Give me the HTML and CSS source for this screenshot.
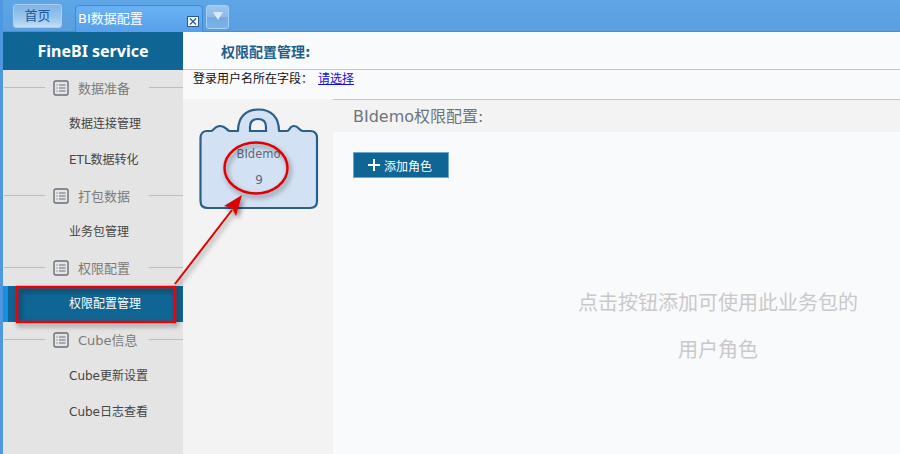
FILE: index.html
```html
<!DOCTYPE html>
<html lang="zh">
<head>
<meta charset="utf-8">
<title>BI数据配置</title>
<link rel="stylesheet" href="styles.css">
</head>
<body>
<svg class="defs" width="0" height="0" aria-hidden="true">
  <symbol id="list" viewBox="0 0 16 16">
    <rect x="1" y="1" width="14" height="14" rx="1.5" fill="none" stroke="#666e7a" stroke-width="1.4"/>
    <path d="M3.500 5h1M6 5h6.500M3.500 8h1M6 8h6.500M3.500 11h1M6 11h6.500" stroke="#666e7a" stroke-width="1.100" fill="none"/>
  </symbol>
</svg>
<div class="app">
  <header class="tabbar">
    <div class="tab-home">首页</div>
    <div class="tab-active"><span>BI数据配置</span>
      <svg class="tab-close" viewBox="0 0 12 11" width="12" height="11"><rect x=".5" y=".5" width="11" height="10" fill="#f4f8fc" stroke="#275b92"/><path d="M3 2.500L9 8.500M9 2.500L3 8.500" stroke="#275b92" stroke-width="1.200"/></svg>
    </div>
    <div class="tab-more"><i class="tri"></i></div>
  </header>
  <div class="body">
    <aside class="side">
      <div class="brand">FineBI service</div>
      <div class="group"><svg class="gicon"><use href="#list"/></svg><span>数据准备</span></div>
      <div class="item">数据连接管理</div>
      <div class="item">ETL数据转化</div>
      <div class="group"><svg class="gicon"><use href="#list"/></svg><span>打包数据</span></div>
      <div class="item">业务包管理</div>
      <div class="group"><svg class="gicon"><use href="#list"/></svg><span>权限配置</span></div>
      <div class="item active">权限配置管理</div>
      <div class="group"><svg class="gicon"><use href="#list"/></svg><span>Cube信息</span></div>
      <div class="item">Cube更新设置</div>
      <div class="item">Cube日志查看</div>
    </aside>
    <main class="main">
      <div class="title">权限配置管理:</div>
      <div class="userfield">登录用户名所在字段：<a class="pick" href="#">请选择</a></div>
      <div class="panes">
        <section class="packs">
          <div class="pack">
            <svg class="bag" viewBox="0 0 120 102" width="120" height="102">
              <path d="M8 23H12C15 23 15 18 21 18C27 18 28 23 31 23H39C39 9 47 1.500 59.500 1.500C72 1.500 80 9 80 23H88C91 23 90 18 95 18C100 18 100 23 104 23H111C116 23 118 26 118 30V93C118 98 115 100 111 100H9C4 100 1.500 98 1.500 93V30C1.500 26 4 23 8 23Z" fill="#d2e2f4" stroke="#2a5f87" stroke-width="2.200" stroke-linejoin="round"/>
              <path d="M51 23V19C51 14 54 11 59 11C64 11 67 14 67 19V23Z" fill="#f3f3f3" stroke="#2a5f87" stroke-width="2.200"/>
            </svg>
            <div class="pack-name">BIdemo</div>
            <div class="pack-count">9</div>
          </div>
        </section>
        <section class="detail">
          <div class="detail-head">BIdemo权限配置:</div>
          <div class="detail-body">
            <button class="add"><svg class="plus" viewBox="0 0 12 12" width="12" height="12"><path d="M6 0V12M0 6H12" stroke="#fff" stroke-width="2"/></svg>添加角色</button>
            <div class="empty"><p>点击按钮添加可使用此业务包的</p><p>用户角色</p></div>
          </div>
        </section>
      </div>
    </main>
  </div>
  <svg class="note" width="900" height="454" viewBox="0 0 900 454">
    <defs>
      <filter id="sh" x="-20%" y="-20%" width="140%" height="140%"><feDropShadow dx="2" dy="3" stdDeviation="2.500" flood-color="#000" flood-opacity=".45"/></filter>
    </defs>
    <g filter="url(#sh)">
      <rect x="17" y="287" width="158" height="35" fill="none" stroke="#f00000" stroke-width="2.500"/>
      <path d="M175 284L232 210" stroke="#e00000" stroke-width="2" fill="none"/>
      <path d="M242 195L236 216L232 208L224 206Z" fill="#e00000"/>
      <ellipse cx="256" cy="168" rx="31.500" ry="25.500" fill="none" stroke="#e00000" stroke-width="2.500"/>
    </g>
  </svg>
</div>
</body>
</html>
```
FILE: styles.css
```css
* { box-sizing: border-box; }
html, body { margin: 0; padding: 0; }
body { width: 900px; height: 454px; overflow: hidden; background: #f9fafc; font-family: "DejaVu Sans", "Noto Sans CJK SC", sans-serif; }
.defs { position: absolute; }
.app { position: relative; width: 900px; height: 454px; display: flex; flex-direction: column; border-left: 3px solid #4f97e0; }
.tabbar { height: 32px; flex: none; display: flex; align-items: flex-start; background: linear-gradient(#5ea6e6, #5a9fe0); border-bottom: 1px solid #4a8fd4; padding: 4px 0 0 10px; }
.tab-home { width: 49px; height: 24px; margin-right: 13px; border: 1px solid #a9d0f2; border-radius: 3px; background: linear-gradient(#7fb3e6, #9cc6ee 60%, #c3def5); color: #1d5a96; font-size: 13px; line-height: 22px; text-align: center; }
.tab-active { position: relative; width: 128px; height: 27px; margin: 1px 3px 0 0; border: 1px solid #3c8ad8; border-bottom: 0; border-radius: 4px 4px 0 0; background: linear-gradient(#6ab2f5, #57a0ea); color: #fff; font-size: 13px; line-height: 25px; padding-left: 2px; white-space: nowrap; }
.tab-close { position: absolute; right: 3px; bottom: 5px; }
.tab-more { width: 23px; height: 24px; margin-top: 1px; border: 1px solid #a9d0f2; border-radius: 3px; background: linear-gradient(#9ac5ee, #8dbcea 50%, #72aae2 50%, #7db2e6); display: flex; align-items: center; justify-content: center; }
.tri { width: 0; height: 0; margin-bottom: 3px; border: 5px solid transparent; border-top: 8px solid #d9eafa; border-bottom: 0; }
.body { flex: 1; display: flex; min-height: 0; }
.side { width: 180px; flex: none; background: #e4e4e4; }
.brand { height: 38px; background: #0f6593; color: #fff; font-family: "Noto Sans", sans-serif; font-size: 16px; font-weight: 700; line-height: 38px; text-align: center; }
.group { height: 36px; display: flex; align-items: center; color: #7b7b7b; font-size: 13px; padding: 0 0 1px 1px; position: relative; }
.group::before { content: ""; width: 41px; height: 1px; background: #bdbdbd; margin-right: 8px; flex: none; }
.group::after { content: ""; flex: 1; height: 1px; background: #bdbdbd; margin-left: 10px; min-width: 0; }
.group span { width: 61px; white-space: nowrap; margin-left: 0; }
.gicon { width: 16px; height: 16px; margin-right: 9px; flex: none; }
.item { height: 36px; line-height: 36px; padding-left: 66px; font-size: 12px; color: #444; white-space: nowrap; }
.item.active { background: #0f6593; color: #fff; border-left: 5px solid #1a8de0; padding-left: 61px; }
.main { flex: 1; min-width: 0; display: flex; flex-direction: column; background: #f9fafc; }
.title { height: 38px; flex: none; line-height: 41px; padding-left: 38px; font-size: 14px; font-weight: 700; color: #1f5f8a; border-bottom: 1px solid #c8c8c8; }
.userfield { height: 29px; flex: none; font-size: 12px; line-height: 18px; padding-left: 10px; color: #111; }
.pick { color: #1a0dd8; margin-left: 5px; }
.panes { flex: 1; display: flex; min-height: 0; }
.packs { width: 150px; flex: none; background: #f3f3f3; padding: 9px 0 0 16px; }
.pack { position: relative; width: 120px; height: 102px; text-align: center; color: #5f6878; font-size: 11.500px; }
.bag { display: block; }
.pack-name { position: absolute; left: -1px; right: 0; top: 39px; }
.pack-count { position: absolute; left: 0; right: 0; top: 65px; font-size: 12px; }
.detail { flex: 1; min-width: 0; display: flex; flex-direction: column; background: #f9fafc; }
.detail-head { height: 33px; flex: none; background: #f3f3f3; border-top: 1px solid #c8c8c8; color: #6c7480; font-size: 16px; line-height: 33px; padding-left: 20px; }
.detail-body { flex: 1; padding: 20px 0 0 20px; }
.add { display: flex; align-items: center; gap: 4px; width: 96px; height: 26px; padding: 0 0 0 14px; background: #0f6593; border: 1px solid #6ea6d3; color: #fff; font: 12px "DejaVu Sans", "Noto Sans CJK SC", sans-serif; }
.empty { width: 300px; margin: 113px 0 0 215px; color: #c9c9c9; font-size: 20px; text-align: center; }
.empty p { margin: 0 0 23px; line-height: 24px; white-space: nowrap; }
.note { position: absolute; left: -3px; top: 0; pointer-events: none; }
```
